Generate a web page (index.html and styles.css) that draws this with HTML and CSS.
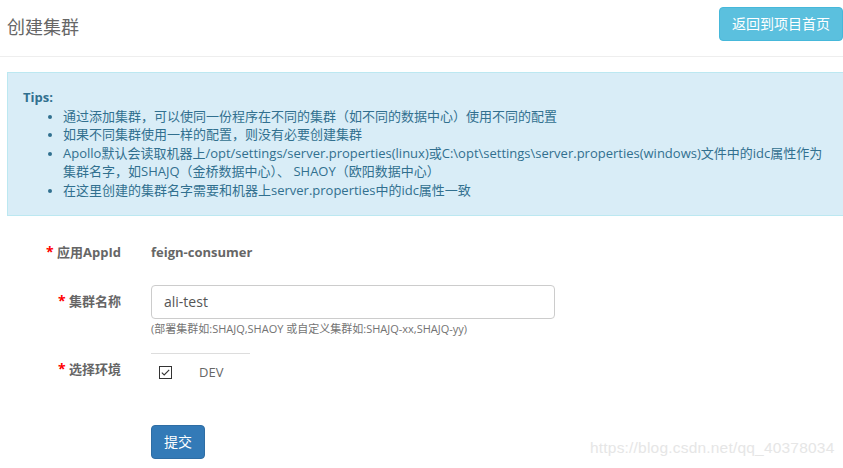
FILE: index.html
```html
<!DOCTYPE html>
<html lang="zh">
<head>
<meta charset="utf-8">
<title>创建集群</title>
<link rel="stylesheet" href="styles.css">
</head>
<body>
<div class="page">
  <header class="header">
    <h1 class="title">创建集群</h1>
    <button class="btn btn-info" type="button">返回到项目首页</button>
  </header>

  <div class="tips-wrap">
    <div class="alert">
      <strong class="tips-title">Tips:</strong>
      <ul class="tips-list">
        <li>通过添加集群，可以使同一份程序在不同的集群（如不同的数据中心）使用不同的配置</li>
        <li>如果不同集群使用一样的配置，则没有必要创建集群</li>
        <li>Apollo默认会读取机器上/opt/settings/server.properties(linux)或C:\opt\settings\server.properties(windows)文件中的idc属性作为集群名字，如SHAJQ（金桥数据中心）、 SHAOY（欧阳数据中心）</li>
        <li>在这里创建的集群名字需要和机器上server.properties中的idc属性一致</li>
      </ul>
    </div>
  </div>

  <form class="form">
    <div class="row row-app">
      <label class="label"><span class="req">*</span> 应用AppId</label>
      <div class="value">feign-consumer</div>
    </div>
    <div class="row row-name">
      <label class="label label-pad"><span class="req">*</span> 集群名称</label>
      <div class="field">
        <input class="input" type="text" value="ali-test">
        <div class="help">(部署集群如:SHAJQ,SHAOY 或自定义集群如:SHAJQ-xx,SHAJQ-yy)</div>
      </div>
    </div>
    <div class="row row-env">
      <label class="label label-env"><span class="req">*</span> 选择环境</label>
      <div class="env">
        <div class="env-line"></div>
        <div class="env-item">
          <span class="checkbox">
            <svg width="13" height="13" viewBox="0 0 13 13"><rect x="0.5" y="0.5" width="12" height="12" fill="#fff" stroke="#333"/><path d="M2.8 6.6 L5.2 9 L10.2 3.8" fill="none" stroke="#333" stroke-width="1.1"/></svg>
          </span>
          <span class="env-name">DEV</span>
        </div>
      </div>
    </div>
    <div class="row row-submit">
      <span></span>
      <div><button class="btn btn-primary" type="button">提交</button></div>
    </div>
  </form>

  <div class="watermark">https://blog.csdn.net/qq_40378034</div>
</div>
</body>
</html>
```

FILE: styles.css
```css
html, body {
  margin: 0;
  padding: 0;
  background: #fff;
}
body {
  font-family: "Open Sans", "Noto Sans CJK SC", sans-serif;
  font-size: 13px;
  color: #555;
  overflow: hidden;
}
.page {
  position: relative;
  width: 843px;
  height: 468px;
  overflow: hidden;
}
.header {
  height: 57px;
  border-bottom: 1px solid #eee;
  display: flex;
  justify-content: space-between;
  align-items: flex-start;
  padding: 0 0 0 7px;
  box-sizing: border-box;
}
.title {
  margin: 15px 0 0;
  font-size: 18px;
  font-weight: normal;
  line-height: 24px;
  color: #666;
}
.btn {
  font-family: "Open Sans", "Noto Sans CJK SC", sans-serif;
  font-size: 14px;
  line-height: 20px;
  padding: 6px 12px;
  border: 1px solid transparent;
  border-radius: 4px;
  color: #fff;
  cursor: pointer;
}
.btn-info {
  margin-top: 7px;
  background: #5bc0de;
  border-color: #46b8da;
}
.btn-primary {
  background: #337ab7;
  border-color: #2e6da4;
}
.tips-wrap {
  padding: 15px 0 0 7px;
}
.alert {
  margin-right: -20px;
  background: #d9edf7;
  border: 1px solid #bce8f1;
  color: #31708f;
  padding: 15px;
  line-height: 18.6px;
}
.tips-title {
  display: block;
  font-weight: bold;
}
.tips-list {
  margin: 0;
  padding-left: 40px;
  max-width: 765px;
}
.tips-list li::marker {
  font-size: 11px;
}
.form {
  margin-top: 26px;
}
.row {
  display: grid;
  grid-template-columns: 121px 1fr;
  column-gap: 30px;
  align-items: start;
}
.label {
  text-align: right;
  font-weight: bold;
  color: #666;
  line-height: 20px;
  white-space: nowrap;
}
.req {
  color: #f00;
  font-size: 14px;
}
.value {
  font-weight: bold;
  color: #666;
  line-height: 20px;
}
.row-name {
  margin-top: 23px;
}
.label-pad {
  padding-top: 6px;
}
.input {
  display: block;
  box-sizing: border-box;
  width: 404px;
  height: 34px;
  padding: 6px 12px;
  border: 1px solid #ccc;
  border-radius: 4px;
  font-family: "Open Sans", "Noto Sans CJK SC", sans-serif;
  font-size: 14px;
  color: #555;
  outline: none;
}
.help {
  margin-top: 2px;
  font-size: 11px;
  line-height: 15px;
  color: #737373;
}
.row-env {
  margin-top: 17px;
}
.label-env {
  padding-top: 6px;
}
.env-line {
  width: 99px;
  border-top: 1px solid #ddd;
}
.env-item {
  display: flex;
  align-items: center;
  padding: 12px 0 0 8px;
  height: 13px;
}
.checkbox {
  display: block;
  width: 13px;
  height: 13px;
}
.checkbox svg {
  display: block;
}
.env-name {
  margin-left: 27px;
  color: #666;
  line-height: 16px;
}
.row-submit {
  margin-top: 46px;
}
.watermark {
  position: absolute;
  left: 590px;
  top: 439px;
  font-family: "Liberation Sans", Arial, sans-serif;
  font-size: 15.5px;
  color: #e6e6e6;
  letter-spacing: 0.2px;
}
```
